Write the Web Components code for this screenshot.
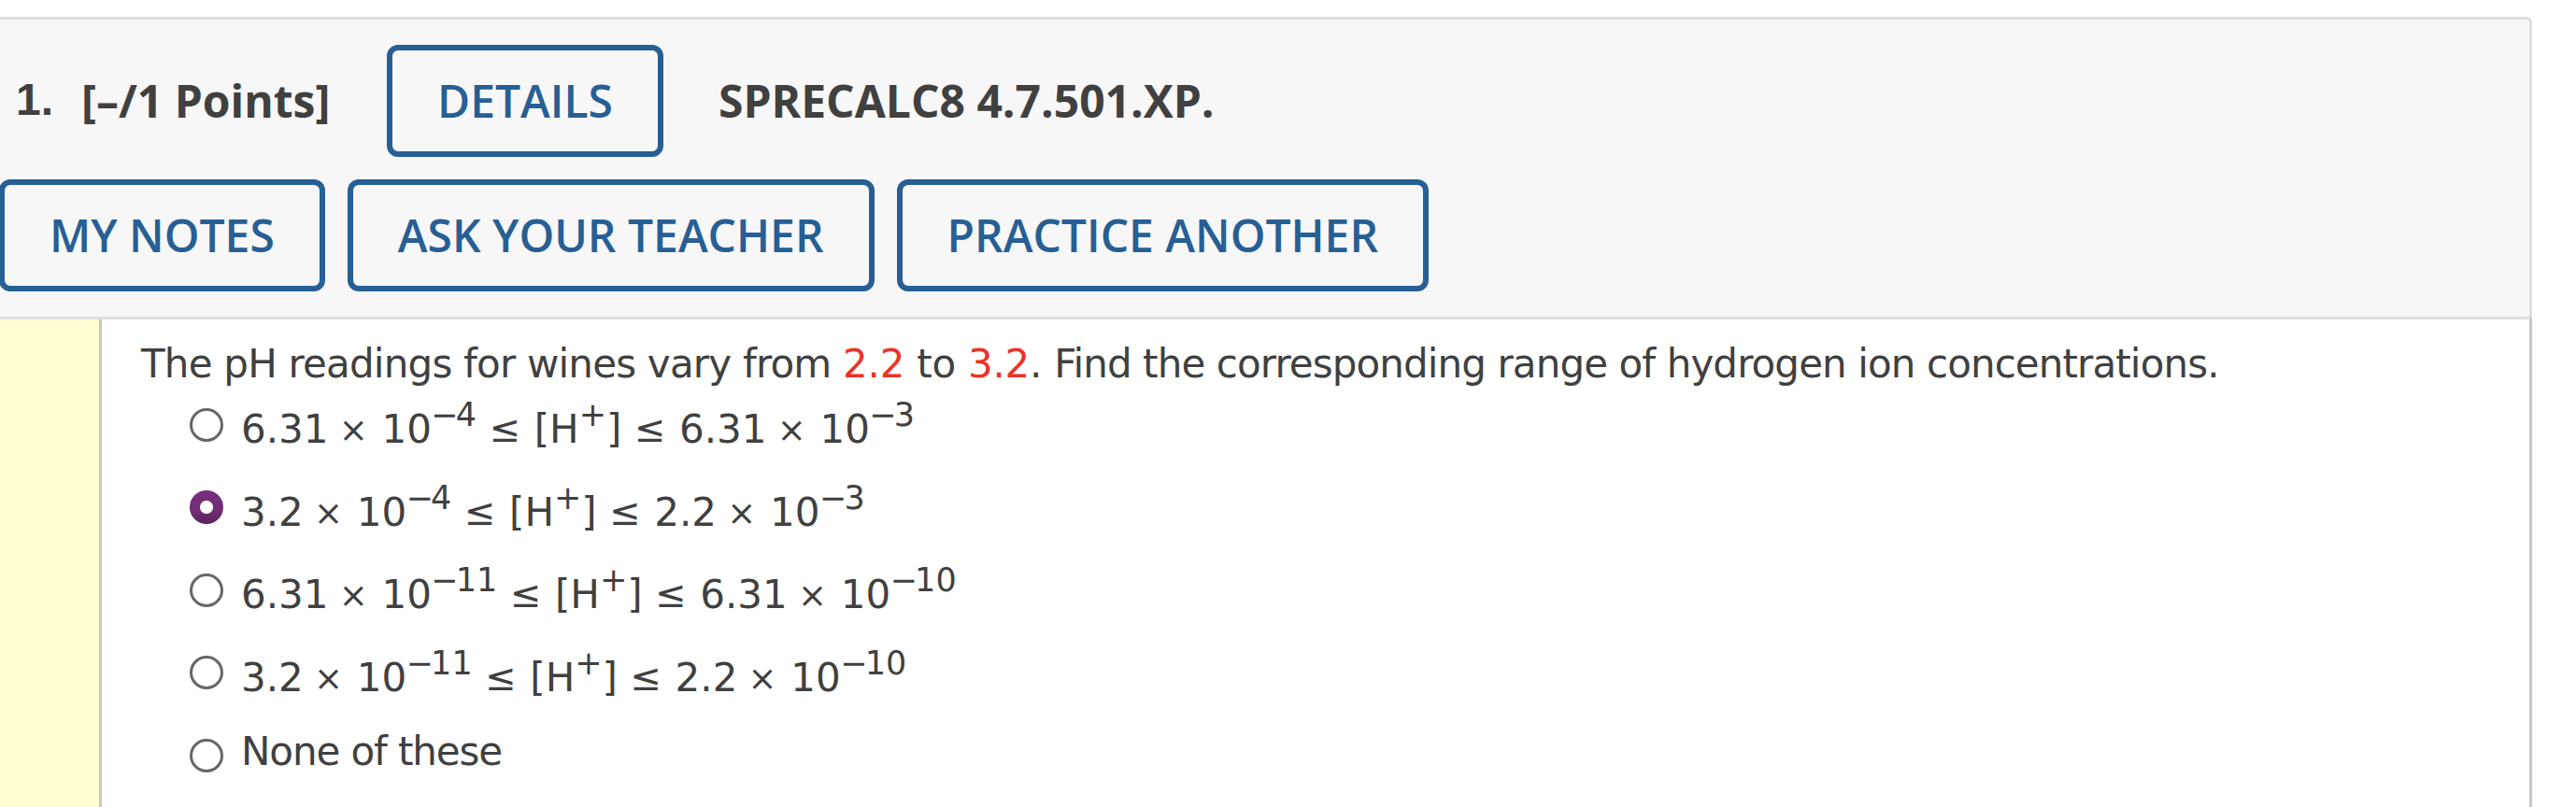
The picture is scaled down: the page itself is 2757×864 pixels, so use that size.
<!DOCTYPE html>
<html lang="en">
<head>
<meta charset="utf-8">
<title>SPRECALC8 4.7.501.XP.</title>
<style>
  body {
    margin: 0;
    height: 864px;
    overflow: hidden;
    background: #fff;
    color: #404040;
  }
</style>
</head>
<body>

<template id="outline-button">
  <style>
    :host {
      display: block;
      flex: none;
    }
    button {
      display: block;
      box-sizing: border-box;
      height: 120px;
      margin: 0;
      padding: 0 48px;
      border: 6px solid #275f95;
      border-radius: 12px;
      background: transparent;
      color: #275f95;
      font: 600 48px/66px "Open Sans", sans-serif;
      white-space: nowrap;
      cursor: pointer;
    }
  </style>
  <button type="button"><slot></slot></button>
</template>

<template id="question-header">
  <style>
    :host {
      display: flex;
      flex-direction: column;
      gap: 24px;
      position: relative;
      padding: 27px 0;
      border: 3px solid #dedede;
      border-left: 0;
      border-radius: 0 6px 6px 0;
      background: #f7f7f7;
      font: 700 48px/66px "Open Sans", sans-serif;
      white-space: nowrap;
    }
    .title, .actions {
      display: flex;
      align-items: center;
    }
    .actions {
      gap: 24px;
      margin-left: -1px;
    }
    .number {
      width: 70px;
      padding: 0 0 2px 17px;
      font: 700 48px/66px "Liberation Sans", sans-serif;
    }
    .points {
      width: 327px;
    }
    .code {
      margin-left: 59px;
    }
  </style>
  <div class="title">
    <span class="number"><slot name="number"></slot></span>
    <span class="points"><slot name="points"></slot></span>
    <slot name="details"></slot>
    <span class="code"><slot name="code"></slot></span>
  </div>
  <div class="actions"><slot></slot></div>
</template>

<template id="question-body">
  <style>
    :host {
      display: flex;
      box-sizing: border-box;
      height: 528px;
      margin-top: -6px;
      border-right: 3px solid #c8c8c8;
      font: 42px/50px "DejaVu Sans", Verdana, sans-serif;
      white-space: nowrap;
    }
    .gutter {
      width: 106px;
      border-right: 3px solid #c8c8c8;
      background: #ffffd3;
    }
    .content {
      padding: 29px 0 0 43px;
    }
    .choices {
      display: flex;
      flex-direction: column;
      margin: 15px 0 0 51px;
    }
  </style>
  <div class="gutter"></div>
  <div class="content">
    <slot name="prompt"></slot>
    <div class="choices"><slot></slot></div>
  </div>
</template>

<template id="radio-choice">
  <style>
    :host {
      display: flex;
      align-items: flex-start;
      gap: 19px;
      height: 88.4px;
      cursor: pointer;
    }
    .dot {
      box-sizing: border-box;
      width: 36px;
      height: 36px;
      margin-top: 7px;
      border: 3px solid #666;
      border-radius: 50%;
      background: #fff;
    }
    :host([checked]) .dot {
      border: 0;
      background: radial-gradient(circle, #fff 6.5px, transparent 7.5px),
        linear-gradient(#78307c, #702d75 60%, #58235c);
    }
    .label {
      padding-top: 5.4px;
    }
    /* plain text sits higher than a line with exponents */
    :host([plain]) .label {
      padding-top: 0;
      margin-top: -4px;
      letter-spacing: -1.1px;
    }
  </style>
  <div class="dot"></div>
  <div class="label"><slot></slot></div>
</template>

<template id="sci-number">
  <style>
    :host {
      display: inline;
    }
    .times {
      margin: 0 1.4px 0 -2.2px;
      font-size: 37px;
      line-height: 0;
      vertical-align: 1px;
    }
    sup {
      margin-left: -0.8px;
      font-size: 35px;
      line-height: 0;
      vertical-align: 18px;
    }
    .minus {
      margin-right: -2.6px;
    }
  </style><span class="mantissa"></span> <span class="times">×</span> 10<sup><span class="minus">−</span><span class="exp"></span></sup></template>

<template id="ion-range">
  <style>
    :host {
      display: inline;
    }
    .le {
      margin: 0 1.2px 0 0.2px;
      font-size: 40px;
      line-height: 0;
      vertical-align: 1px;
    }
    sup {
      font-size: 35px;
      line-height: 0;
      vertical-align: 18px;
    }
  </style><slot name="low"></slot> <span class="le">≤</span> [H<sup>+</sup>] <span class="le">≤</span> <slot name="high"></slot></template>

<template id="question-prompt">
  <style>
    :host {
      display: block;
      margin-left: -1px;
      letter-spacing: -0.8px;
    }
    ::slotted(b) {
      color: #ee3124;
      font-weight: 400;
      letter-spacing: -0.2px;
    }
    ::slotted(span) {
      letter-spacing: -0.3px;
    }
    ::slotted(.tail) {
      letter-spacing: -0.9px;
    }
  </style>
  <slot></slot>
</template>

<template id="webassign-question">
  <style>
    :host {
      display: block;
      width: 2710px;
      padding-top: 18px;
    }
  </style>
  <slot></slot>
</template>

<script>
  (function() {
    class TemplateElement extends HTMLElement {
      constructor() {
        super();
        const tmpl = document.querySelector('template#' + this.localName);
        this.attachShadow({mode: 'open'}).appendChild(document.importNode(tmpl.content, true));
      }
    }
    class SciNumber extends TemplateElement {
      connectedCallback() {
        this.shadowRoot.querySelector('.mantissa').textContent = this.getAttribute('mantissa');
        this.shadowRoot.querySelector('.exp').textContent = this.getAttribute('exp');
      }
    }
    class RadioChoice extends TemplateElement {
      connectedCallback() {
        this.addEventListener('click', this.onClick);
      }
      onClick() {
        this.parentNode.querySelectorAll('radio-choice').forEach(c => c.removeAttribute('checked'));
        this.setAttribute('checked', '');
      }
    }
    customElements.define('webassign-question', class extends TemplateElement {});
    customElements.define('outline-button', class extends TemplateElement {});
    customElements.define('question-header', class extends TemplateElement {});
    customElements.define('question-body', class extends TemplateElement {});
    customElements.define('question-prompt', class extends TemplateElement {});
    customElements.define('ion-range', class extends TemplateElement {});
    customElements.define('sci-number', SciNumber);
    customElements.define('radio-choice', RadioChoice);
  })();
</script>

<webassign-question>
  <question-header>
    <span slot="number">1.</span>
    <span slot="points">[–/1 Points]</span>
    <outline-button slot="details">DETAILS</outline-button>
    <span slot="code">SPRECALC8 4.7.501.XP.</span>
    <outline-button>MY NOTES</outline-button>
    <outline-button>ASK YOUR TEACHER</outline-button>
    <outline-button>PRACTICE ANOTHER</outline-button>
  </question-header>
  <question-body>
    <question-prompt slot="prompt">The pH readings for wines vary from <b>2.2</b><span> to </span><b>3.2</b><span>. </span><span class="tail">Find the corresponding range of hydrogen ion concentrations.</span></question-prompt>
    <radio-choice>
      <ion-range><sci-number slot="low" mantissa="6.31" exp="4"></sci-number><sci-number slot="high" mantissa="6.31" exp="3"></sci-number></ion-range>
    </radio-choice>
    <radio-choice checked>
      <ion-range><sci-number slot="low" mantissa="3.2" exp="4"></sci-number><sci-number slot="high" mantissa="2.2" exp="3"></sci-number></ion-range>
    </radio-choice>
    <radio-choice>
      <ion-range><sci-number slot="low" mantissa="6.31" exp="11"></sci-number><sci-number slot="high" mantissa="6.31" exp="10"></sci-number></ion-range>
    </radio-choice>
    <radio-choice>
      <ion-range><sci-number slot="low" mantissa="3.2" exp="11"></sci-number><sci-number slot="high" mantissa="2.2" exp="10"></sci-number></ion-range>
    </radio-choice>
    <radio-choice plain>None of these</radio-choice>
  </question-body>
</webassign-question>

</body>
</html>
